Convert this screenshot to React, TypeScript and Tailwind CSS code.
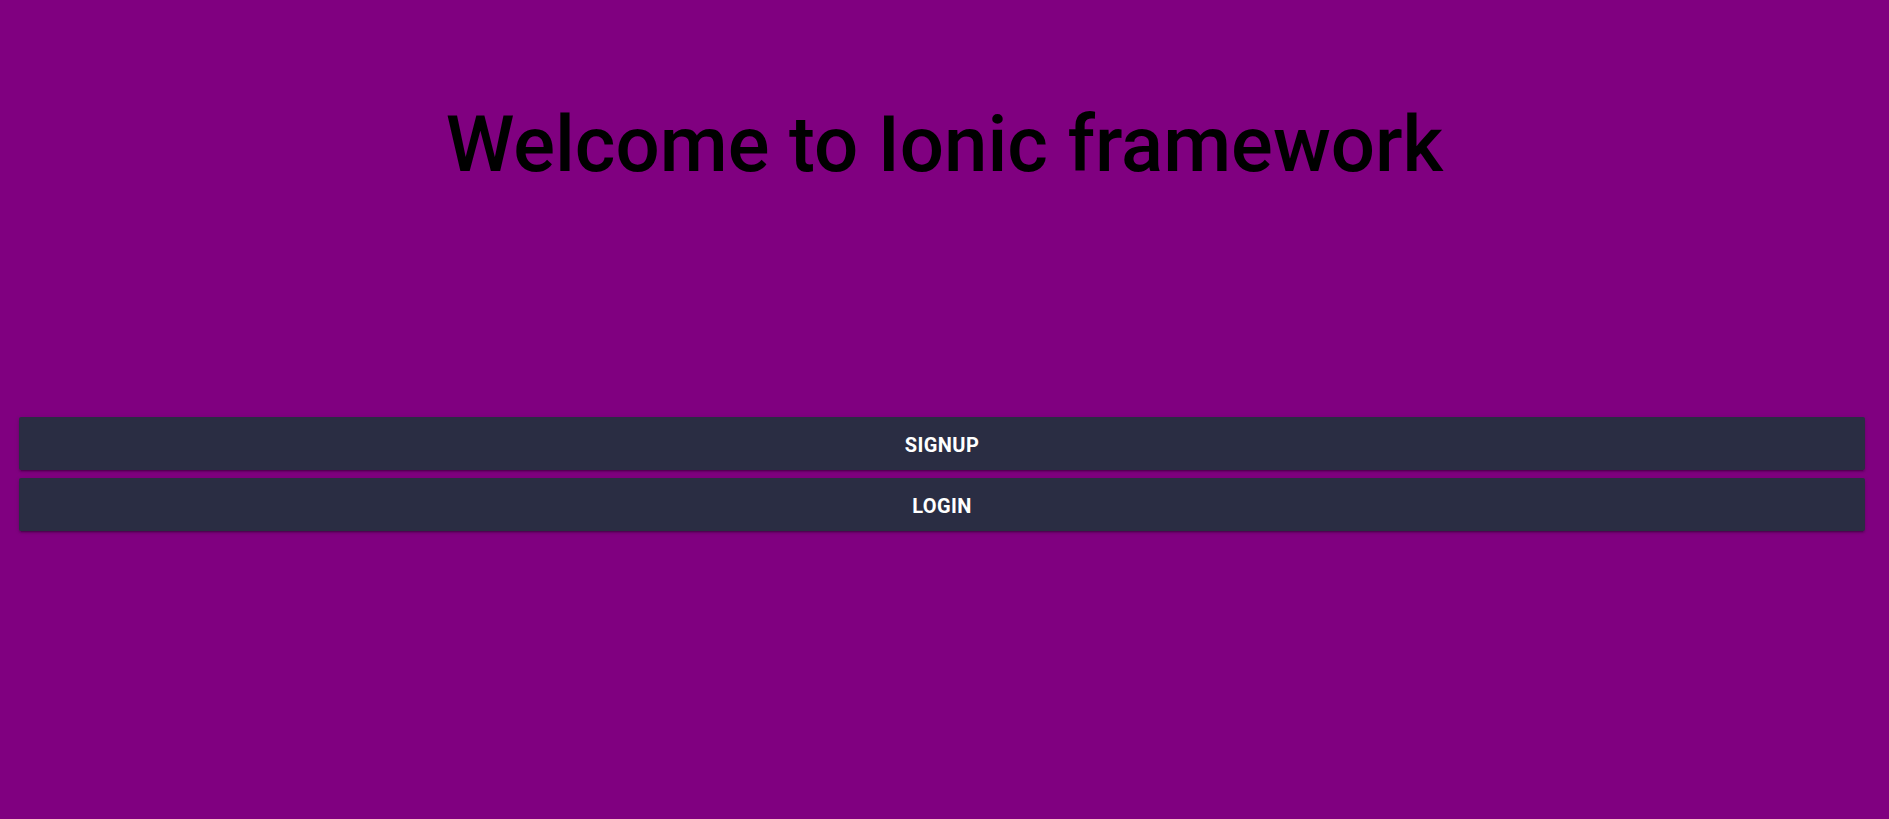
export default function App() {
  return (
    <div
      className="w-full h-[819px] bg-[#800080] flex flex-col"
      style={{ fontFamily: 'Roboto, "Noto Sans", sans-serif' }}
    >
      <h1 className="mt-[106px] text-center text-[78px] leading-[78px] font-medium text-black">
        Welcome to Ionic framework
      </h1>
      <div className="mt-[233px] ml-[19px] mr-[24px] flex flex-col gap-[8px]">
        <button className="h-[53px] w-full pt-[2px] bg-[#2a2d43] text-white text-[20px] font-bold uppercase tracking-[0.02em] rounded-[2px] shadow-[0_3px_1px_-2px_rgba(0,0,0,0.2),0_2px_2px_0_rgba(0,0,0,0.14),0_1px_5px_0_rgba(0,0,0,0.12)]">
          Signup
        </button>
        <button className="h-[53px] w-full pt-[2px] bg-[#2a2d43] text-white text-[20px] font-bold uppercase tracking-[0.02em] rounded-[2px] shadow-[0_3px_1px_-2px_rgba(0,0,0,0.2),0_2px_2px_0_rgba(0,0,0,0.14),0_1px_5px_0_rgba(0,0,0,0.12)]">
          Login
        </button>
      </div>
    </div>
  );
}
